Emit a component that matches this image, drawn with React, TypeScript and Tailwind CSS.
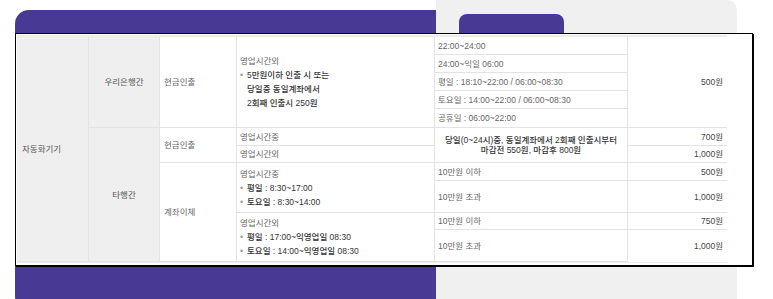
import React from 'react';

const CELL = 'border-r border-b border-[#e3e3e3] flex items-center';
const HEAD = 'bg-[#efefef] text-[#555]';

function Bullet({ children }: { children: React.ReactNode }) {
  return (
    <div className="flex">
      <span className="w-[7px] shrink-0 text-[#999]">•</span>
      <span className="text-[#333] font-medium">{children}</span>
    </div>
  );
}

export default function App() {
  return (
    <div className="relative h-[299px] w-[773px] overflow-hidden bg-white font-['Liberation_Sans','Noto_Sans_CJK_KR',sans-serif] text-[8.5px]">
      {/* background decoration */}
      <div className="flex pl-[15px]">
        <div className="mt-[10px] h-[300px] w-[421px] rounded-l-[14px] bg-[#483a94]" />
        <div className="h-[299px] w-[301px] rounded-tr-[10px] bg-[#f0f0f0] pl-[23px] pt-[14px]">
          <div className="h-[30px] w-[105px] rounded-t-[8px] bg-[#483a94]" />
        </div>
      </div>

      {/* fee table */}
      <div className="absolute left-[15px] top-[33px] w-[738px] border border-black bg-white pb-[2px] pl-px pr-[25px] pt-px shadow-[1px_1px_0_#000]">
        <div className="grid grid-cols-[72px_71px_77px_198px_193px_99px] grid-rows-[18px_18px_18px_18px_19px_18px_17px_18px_32px_17px_32px] border-t-2 border-b border-[#ececec] leading-[14px] text-[#666]">
          {/* col 1 */}
          <div className={`${CELL} ${HEAD} col-start-1 row-start-1 row-span-11 pl-[5px]`}>자동화기기</div>

          {/* col 2 */}
          <div className={`${CELL} ${HEAD} col-start-2 row-start-1 row-span-5 justify-center`}>우리은행간</div>
          <div className={`${CELL} ${HEAD} col-start-2 row-start-6 row-span-6 justify-center`}>타행간</div>

          {/* col 3 */}
          <div className={`${CELL} col-start-3 row-start-1 row-span-5 pl-1`}>현금인출</div>
          <div className={`${CELL} col-start-3 row-start-6 row-span-2 pl-1`}>현금인출</div>
          <div className={`${CELL} col-start-3 row-start-8 row-span-4 pl-1`}>계좌이체</div>

          {/* col 4 */}
          <div className={`${CELL} col-start-4 row-start-1 row-span-5 pl-[3px]`}>
            <div>
              <div>영업시간외</div>
              <Bullet>
                5만원이하 인출 시 또는
                <br />
                당일중 동일계좌에서
                <br />
                2회째 인출시 250원
              </Bullet>
            </div>
          </div>
          <div className={`${CELL} col-start-4 row-start-6 pl-[3px]`}>영업시간중</div>
          <div className={`${CELL} col-start-4 row-start-7 pl-[3px]`}>영업시간외</div>
          <div className={`${CELL} col-start-4 row-start-8 row-span-2 pl-[3px]`}>
            <div>
              <div>영업시간중</div>
              <Bullet>평일 : 8:30~17:00</Bullet>
              <Bullet>토요일 : 8:30~14:00</Bullet>
            </div>
          </div>
          <div className={`${CELL} col-start-4 row-start-10 row-span-2 pl-[3px]`}>
            <div>
              <div>영업시간외</div>
              <Bullet>평일 : 17:00~익영업일 08:30</Bullet>
              <Bullet>토요일 : 14:00~익영업일 08:30</Bullet>
            </div>
          </div>

          {/* col 5 */}
          <div className={`${CELL} col-start-5 row-start-1 pl-[3px]`}>22:00~24:00</div>
          <div className={`${CELL} col-start-5 row-start-2 pl-[3px]`}>24:00~익일 06:00</div>
          <div className={`${CELL} col-start-5 row-start-3 pl-[3px]`}>평일 : 18:10~22:00 / 06:00~08:30</div>
          <div className={`${CELL} col-start-5 row-start-4 pl-[3px]`}>토요일 : 14:00~22:00 / 06:00~08:30</div>
          <div className={`${CELL} col-start-5 row-start-5 pl-[3px]`}>공휴일 : 06:00~22:00</div>
          <div className={`${CELL} col-start-5 row-start-6 row-span-2 justify-center text-center font-medium leading-[10px] text-[#333]`}>
            당일(0~24시)중, 동일계좌에서 2회째 인출시부터
            <br />
            마감전 550원, 마감후 800원
          </div>
          <div className={`${CELL} col-start-5 row-start-8 pl-[3px]`}>10만원 이하</div>
          <div className={`${CELL} col-start-5 row-start-9 pl-[3px]`}>10만원 초과</div>
          <div className={`${CELL} col-start-5 row-start-10 pl-[3px]`}>10만원 이하</div>
          <div className={`${CELL} col-start-5 row-start-11 pl-[3px]`}>10만원 초과</div>

          {/* col 6 */}
          <div className={`${CELL} col-start-6 row-start-1 row-span-5 justify-end border-r-0 pr-1 text-[#444]`}>500원</div>
          <div className={`${CELL} col-start-6 row-start-6 justify-end border-r-0 pr-1 text-[#444]`}>700원</div>
          <div className={`${CELL} col-start-6 row-start-7 justify-end border-r-0 pr-1 text-[#444]`}>1,000원</div>
          <div className={`${CELL} col-start-6 row-start-8 justify-end border-r-0 pr-1 text-[#444]`}>500원</div>
          <div className={`${CELL} col-start-6 row-start-9 justify-end border-r-0 pr-1 text-[#444]`}>1,000원</div>
          <div className={`${CELL} col-start-6 row-start-10 justify-end border-r-0 pr-1 text-[#444]`}>750원</div>
          <div className={`${CELL} col-start-6 row-start-11 justify-end border-b-0 border-r-0 pr-1 text-[#444]`}>1,000원</div>
        </div>
      </div>
    </div>
  );
}
